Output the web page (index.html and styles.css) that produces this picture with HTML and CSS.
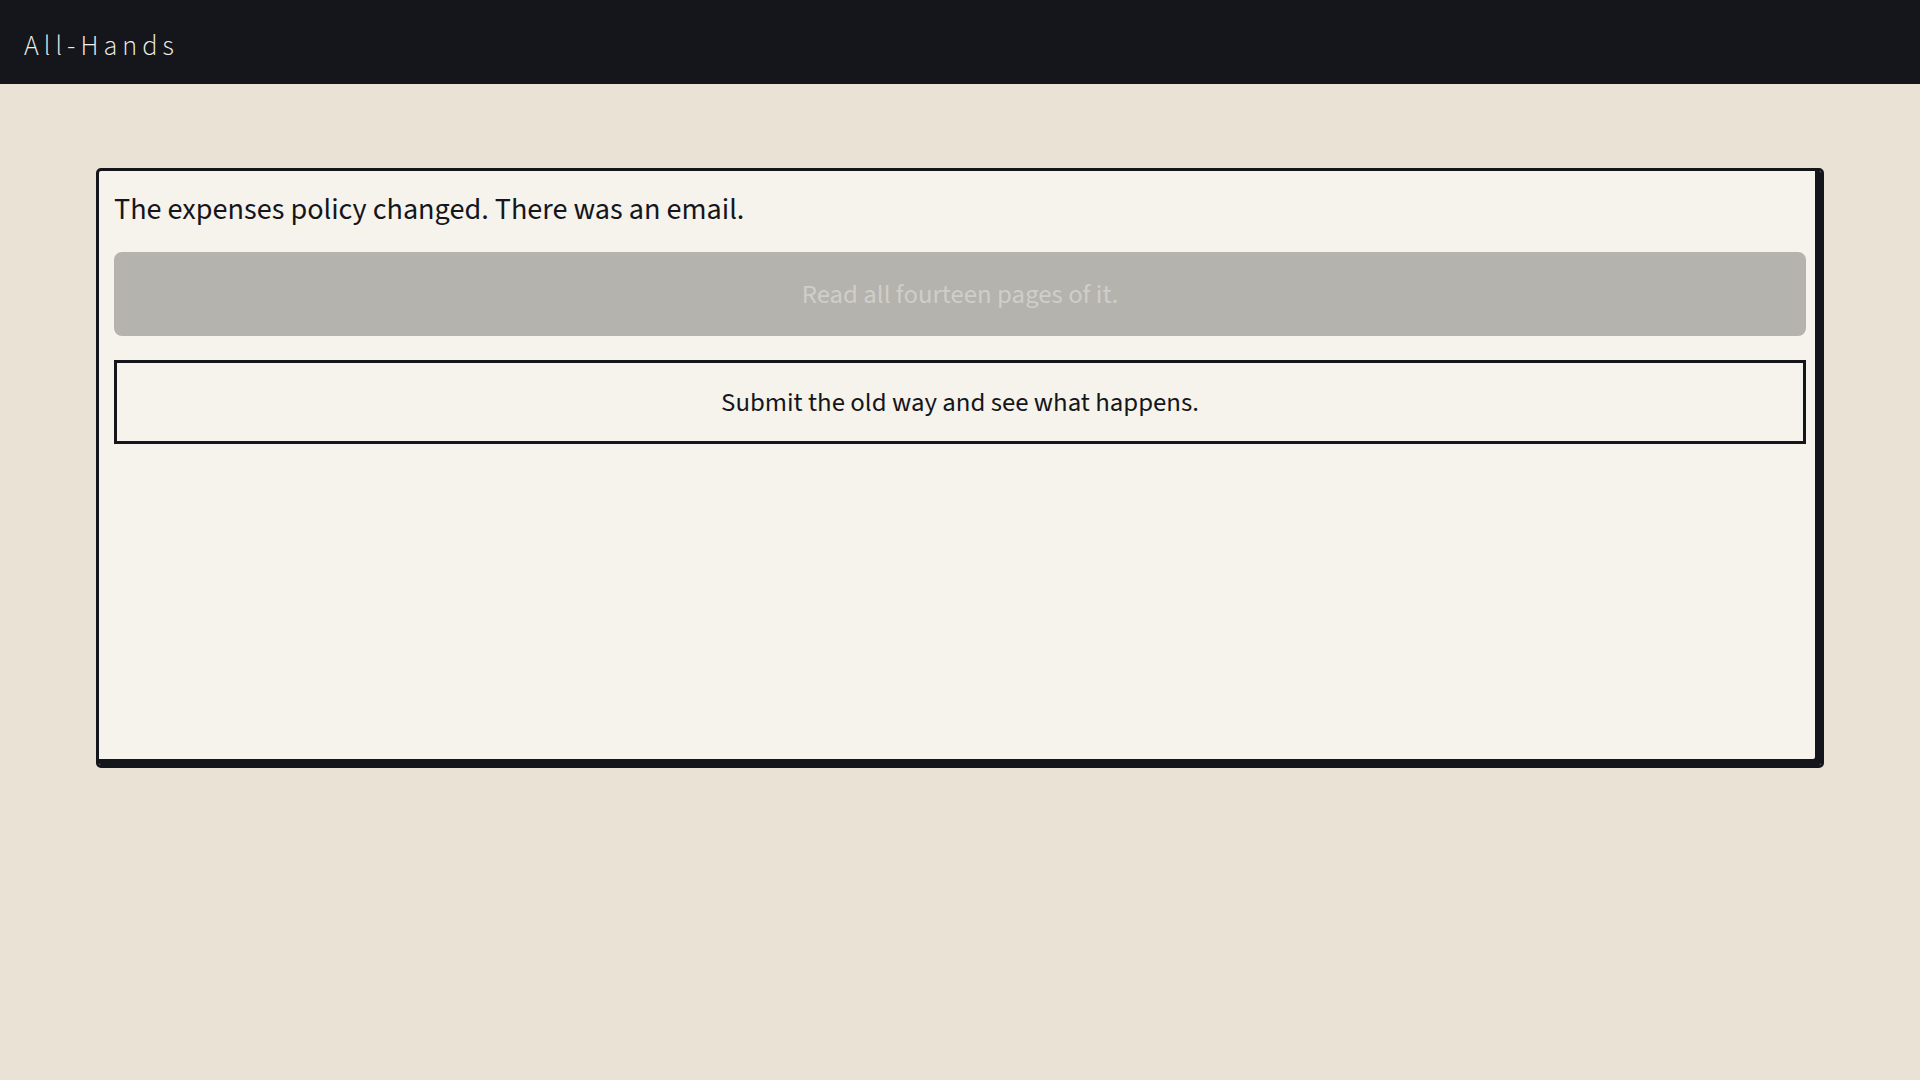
FILE: index.html
```html
<!DOCTYPE html>
<html>
  <head>
    <meta charset="utf-8">
    <title>All-Hands</title>
    <link rel="stylesheet" href="styles.css">
  </head>
  <body>
    <div class="topbar">
      <span class="brand">All-Hands</span>
    </div>

    <div class="main">
      <div class="card">
        <p class="prompt">The expenses policy changed. There was an email.</p>
        <button class="choice choice-off" disabled>Read all fourteen pages of it.</button>
        <button class="choice">Submit the old way and see what happens.</button>
      </div>
    </div>
  </body>
</html>
```

FILE: styles.css
```css
html, body {
  margin: 0;
  padding: 0;
}
body {
  background: #e9e2d5;
  color: #15161b;
  font-family: "Source Sans 3", "Source Sans Pro", "Noto Sans", "Liberation Sans", sans-serif;
  min-height: 1080px;
}

.topbar {
  height: 84px;
  background: #15161b;
  display: flex;
  align-items: center;
  padding: 7px 24px 0 24px;
  box-sizing: border-box;
}
.brand {
  color: #f3f0ea;
  font-size: 28px;
  letter-spacing: 0.18em;
  font-weight: 300;
}

.main {
  padding: 84px 96px 0 96px;
}
.card {
  height: 600px;
  box-sizing: border-box;
  background: #f6f3ec;
  border: 3px solid #15161b;
  border-radius: 5px;
  box-shadow: inset -6px -6px 0 #15161b;
  padding: 16px 15px 15px 15px;
  display: flex;
  flex-direction: column;
}
.prompt {
  margin: 0 0 20px 0;
  font-size: 30.2px;
  line-height: 1.5;
}
.choice {
  display: block;
  width: 100%;
  height: 84px;
  margin: 0 0 24px 0;
  padding: 2px 0 0 0;
  font-family: inherit;
  font-size: 26.8px;
  color: #15161b;
  background: #f6f3ec;
  border: 3px solid #15161b;
  border-radius: 0;
}
.choice-off {
  background: #b4b3ae;
  color: #cfcec9;
  border: none;
  border-radius: 8px;
}
```
